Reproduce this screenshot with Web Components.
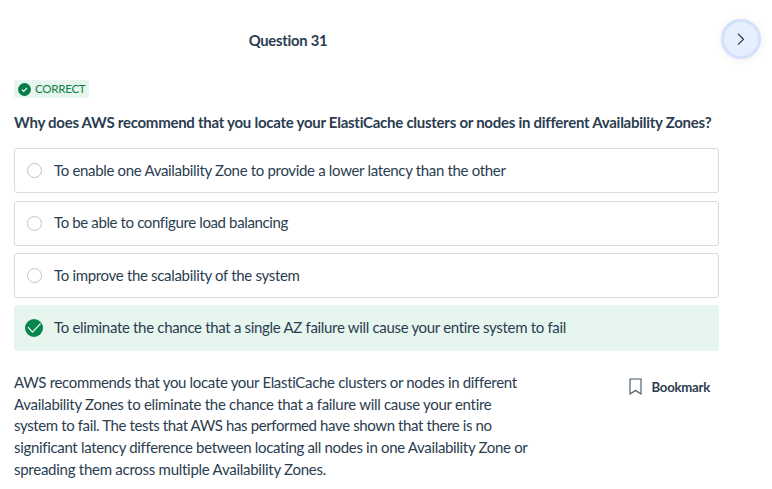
<!DOCTYPE html>
<html lang="en"><head><meta charset="utf-8"><title>Question 31</title>
<style>body{margin:0;background:#fff;color:#2b3d50;font:15px/22px Lato,"Liberation Sans",sans-serif;font-variant-ligatures:none;letter-spacing:-.325px}</style></head>
<body><quiz-page></quiz-page>
<script>
const define=(name,html)=>{
  const t=document.createElement('template');t.innerHTML=html;
  customElements.define(name,class extends HTMLElement{
    constructor(){super();this.attachShadow({mode:'open'}).append(t.content.cloneNode(true));}
  });
};
define('quiz-header',`<style>
:host{display:flex;height:39px;padding:19px 11px 0 14px;align-items:center;justify-content:space-between}
h1{margin:2px 0 0;width:548px;text-align:center;font-size:14.8px;line-height:22px;font-weight:700;letter-spacing:-.25px}
button{box-sizing:border-box;width:40px;height:40px;padding:0;border:3px solid #d2e2fc;border-radius:50%;background:#e6effe;display:grid;place-items:center;box-shadow:0 1px 9px rgba(0,0,0,.07);color:#2b3d50}
svg{display:block}
</style><h1><slot></slot></h1><button aria-label="Next"><svg width="16" height="16" viewBox="0 0 16 16" fill="none" stroke="currentColor" stroke-width="1.2"><path d="M5 2.8l5.5 5.4L5 13.6"/></svg></button>`);
define('status-badge',`<style>
:host{display:flex;align-items:center;width:max-content;height:18px;padding:0 4px;gap:4px;background:#e6f5ee;color:#0b8043;font-size:11.6px;letter-spacing:-.3px;line-height:18px;border-radius:3px}
</style><svg width="13" height="13" viewBox="0 0 13 13"><circle cx="6.5" cy="6.5" r="6.4" fill="#047c45"/><path d="M3.8 6.7l1.8 1.7 3.5-3.5" fill="none" stroke="#fff" stroke-width="1.1"/></svg><span><slot></slot></span>`);
define('answer-option',`<style>
:host{display:flex;box-sizing:border-box;height:45px;align-items:center;border:1px solid #d8dae0;border-radius:3px;padding:0 12px;gap:12px}
:host([correct]){height:46px;background:#e6f5ee;border-color:#e6f5ee}
.radio{box-sizing:border-box;width:15px;height:15px;border:1px solid #bdc3ca;border-radius:50%}
svg{display:none}
:host([correct]) .radio{display:none}:host([correct]) svg{display:block;margin:0 -1px 0 -2px}
.mark{width:15px;display:grid;justify-content:start}
.text{padding-bottom:var(--text-lift,1px)}
</style><span class="mark"><span class="radio"></span><svg width="18" height="18" viewBox="0 0 18 18"><circle cx="9" cy="9" r="9" fill="#088650"/><path d="M3 8.2l4.5 5L15.5 4.6" fill="none" stroke="#fff" stroke-width="1.1"/></svg></span><span class="text"><slot></slot></span>`);
define('bookmark-button',`<style>
:host{display:flex;align-items:center;gap:10px;font-size:13.2px;letter-spacing:-.25px;font-weight:700;line-height:20px}
svg{display:block}
</style><svg width="13" height="17" viewBox="0 0 13 17" fill="none" stroke="#435466" stroke-width="1.1"><path d="M1 1h11v15L6.5 12.5 1 16z"/></svg><span><slot></slot></span>`);
define('quiz-page',`<style>
:host{display:block;width:772px;height:489px;overflow:hidden}
main{padding:22px 53px 0 14px}
h2{margin:13px 0 15px;font-size:15px;letter-spacing:-.262px;line-height:22px;font-weight:700;white-space:nowrap}
.options{display:grid;grid-template-rows:45px 45px 45px 46px;row-gap:7.4px}
.foot{display:flex;justify-content:space-between;align-items:flex-start;padding:20.8px 9px 0 0}
p{margin:0;line-height:21.75px;white-space:nowrap}bookmark-button{margin-top:5px}
answer-option:nth-child(2){margin-top:1px;margin-bottom:-1px;letter-spacing:-.37px;--text-lift:3px}
answer-option:nth-child(4){--text-lift:3px;letter-spacing:-.318px}
</style><quiz-header>Question 31</quiz-header><main><status-badge>CORRECT</status-badge><h2>Why does AWS recommend that you locate your ElastiCache clusters or nodes in different Availability Zones?</h2><div class="options"><answer-option>To enable one Availability Zone to provide a lower latency than the other</answer-option><answer-option>To be able to configure load balancing</answer-option><answer-option>To improve the scalability of the system</answer-option><answer-option correct>To eliminate the chance that a single AZ failure will cause your entire system to fail</answer-option></div><div class="foot"><p>AWS recommends that you locate your ElastiCache clusters or nodes in different<br><span style="letter-spacing:-.295px">Availability Zones to eliminate the chance that a failure will cause your entire</span><br><span style="letter-spacing:-.382px">system to fail. The tests that AWS has performed have shown that there is no</span><br>significant latency difference between locating all nodes in one Availability Zone or<br><span style="letter-spacing:-.265px">spreading them across multiple Availability Zones.</span></p><bookmark-button>Bookmark</bookmark-button></div></main>`);
</script></body></html>
